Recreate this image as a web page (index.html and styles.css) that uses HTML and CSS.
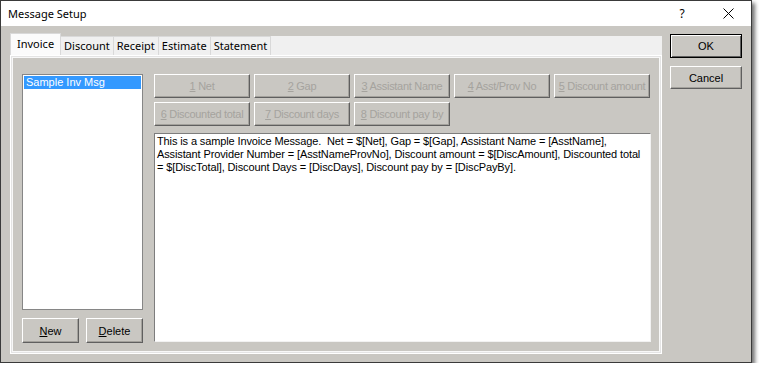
FILE: index.html
```html
<!DOCTYPE html>
<html lang="en">
<head>
    <meta charset="UTF-8">
    <title>Message Setup</title>
    <link rel="stylesheet" href="styles.css">
</head>
<body>

    <div class="window">
        <!-- Title bar -->
        <div class="titlebar">
            <span class="title">Message Setup</span>
            <span class="caption-btn help">?</span>
            <span class="caption-btn close">
                <svg width="11" height="11" viewBox="0 0 11 11"><path d="M0.5 0.5 L10.5 10.5 M10.5 0.5 L0.5 10.5" stroke="#000" stroke-width="1" fill="none"/></svg>
            </span>
        </div>

        <div class="client">
            <!-- Tab control -->
            <div class="tabs">
                <div class="tab-strip">
                    <div class="tab active">Invoice</div>
                    <div class="tab">Discount</div>
                    <div class="tab">Receipt</div>
                    <div class="tab">Estimate</div>
                    <div class="tab">Statement</div>
                    <div class="strip-fill"></div>
                </div>

                <div class="tab-page">
                    <!-- Message list -->
                    <div class="list-col">
                        <div class="listbox">
                            <div class="list-item selected">Sample Inv Msg</div>
                        </div>
                        <div class="list-buttons">
                            <button class="btn small"><u>N</u>ew</button>
                            <button class="btn small"><u>D</u>elete</button>
                        </div>
                    </div>

                    <!-- Field buttons and message text -->
                    <div class="edit-col">
                        <div class="field-grid">
                            <button class="btn field" disabled><u>1</u> Net</button>
                            <button class="btn field" disabled><u>2</u> Gap</button>
                            <button class="btn field" disabled><u>3</u> Assistant Name</button>
                            <button class="btn field" disabled><u>4</u> Asst/Prov No</button>
                            <button class="btn field" disabled><u>5</u> Discount amount</button>
                            <button class="btn field" disabled><u>6</u> Discounted total</button>
                            <button class="btn field" disabled><u>7</u> Discount days</button>
                            <button class="btn field" disabled><u>8</u> Discount pay by</button>
                        </div>
                        <div class="message-text">This is a sample Invoice Message.&nbsp; Net = $[Net], Gap = $[Gap], Assistant Name = [AsstName],<br>Assistant Provider Number = [AsstNameProvNo], Discount amount = $[DiscAmount], Discounted total<br>= $[DiscTotal], Discount Days = [DiscDays], Discount pay by = [DiscPayBy].</div>
                    </div>
                </div>
            </div>

            <!-- Dialog buttons -->
            <div class="side-buttons">
                <button class="btn side default">OK</button>
                <button class="btn side">Cancel</button>
            </div>
        </div>
    </div>

</body>
</html>
```

FILE: styles.css
```css
body {
    margin: 0;
    background-color: #ffffff;
    font-family: "Liberation Sans", Arial, sans-serif;
    font-size: 11px;
}

.window {
    width: 752px;
    height: 363px;
    box-sizing: border-box;
    border: 1px solid #3a3a3a;
    box-shadow: 3px 3px 4px rgba(0, 0, 0, 0.55);
    display: flex;
    flex-direction: column;
}

.titlebar {
    height: 25px;
    background-color: #ffffff;
    display: flex;
    align-items: center;
    font-family: "Noto Sans", sans-serif;
    font-size: 11px;
    color: #000;
}

.title {
    padding-left: 7px;
    flex: 1;
}

.caption-btn {
    width: 46px;
    height: 25px;
    display: flex;
    align-items: center;
    justify-content: center;
    font-size: 12px;
}

.client {
    flex: 1;
    background-color: #c9c7c2;
    display: flex;
    gap: 8px;
    padding: 7px 9px 8px 9px;
}

.tabs {
    width: 652px;
    flex-shrink: 0;
    display: flex;
    flex-direction: column;
}

.tab-strip {
    height: 22px;
    display: flex;
    align-items: flex-end;
    font-family: "Noto Sans", sans-serif;
    font-size: 11px;
}

.tab {
    height: 18px;
    line-height: 17px;
    padding: 0 3px;
    background-color: #f0f0f0;
    border: 1px solid #d9d9d9;
    border-bottom: none;
    margin-left: -1px;
}

.tab.active {
    height: 21px;
    line-height: 19px;
    padding: 0 6px;
    background-color: #fbfbfb;
    margin-left: 0;
    position: relative;
    z-index: 1;
}

.strip-fill {
    flex: 1;
    height: 19px;
    background-color: #f0f0f0;
}

.tab-page {
    flex: 1;
    display: flex;
    gap: 11px;
    border: 1px solid #ffffff;
    box-shadow: inset 0 0 0 1px #e4e4e4, inset 0 0 0 2px #f8f8f8;
    padding: 18px 10px 10px 11px;
}

.list-col {
    width: 121px;
    flex-shrink: 0;
    display: flex;
    flex-direction: column;
}

.listbox {
    flex: 1;
    background-color: #ffffff;
    border: 1px solid #868686;
    padding: 1px;
}

.list-item {
    height: 13px;
    line-height: 13px;
    padding-left: 2px;
}

.list-item.selected {
    background-color: #3399ff;
    color: #ffffff;
}

.list-buttons {
    display: flex;
    justify-content: space-between;
    margin-top: 8px;
}

.btn {
    font-family: "Liberation Sans", Arial, sans-serif;
    font-size: 11px;
    color: #000;
    background-color: #c9c7c2;
    border: 1px solid;
    border-color: #ffffff #5f5f5f #5f5f5f #ffffff;
    box-shadow: inset -1px -1px 0 #a3a19c;
    padding: 0;
    margin: 0;
}

.btn.small {
    width: 57px;
    height: 25px;
}

.edit-col {
    flex: 1;
    min-width: 0;
    display: flex;
    flex-direction: column;
}

.field-grid {
    display: grid;
    grid-template-columns: repeat(5, 96px);
    grid-auto-rows: 24px;
    gap: 4px;
}

.btn.field {
    color: #a5a39e;
    letter-spacing: -0.3px;
    white-space: nowrap;
    overflow: hidden;
}

.message-text {
    flex: 1;
    margin-top: 7px;
    margin-bottom: 1px;
    background-color: #ffffff;
    border: 1px solid;
    border-color: #7d7d7d #f2f2f2 #f2f2f2 #7d7d7d;
    padding: 1px 2px;
    line-height: 13px;
    letter-spacing: -0.12px;
    white-space: nowrap;
    overflow: hidden;
}

.side-buttons {
    width: 72px;
    flex-shrink: 0;
    display: flex;
    flex-direction: column;
    padding-top: 1px;
}

.btn.side {
    height: 23px;
    width: 72px;
}

.btn.default {
    height: 24px;
    border-color: #000;
    box-shadow: inset 1px 1px 0 #ffffff, inset -1px -1px 0 #5f5f5f;
    margin-bottom: 8px;
}
```
